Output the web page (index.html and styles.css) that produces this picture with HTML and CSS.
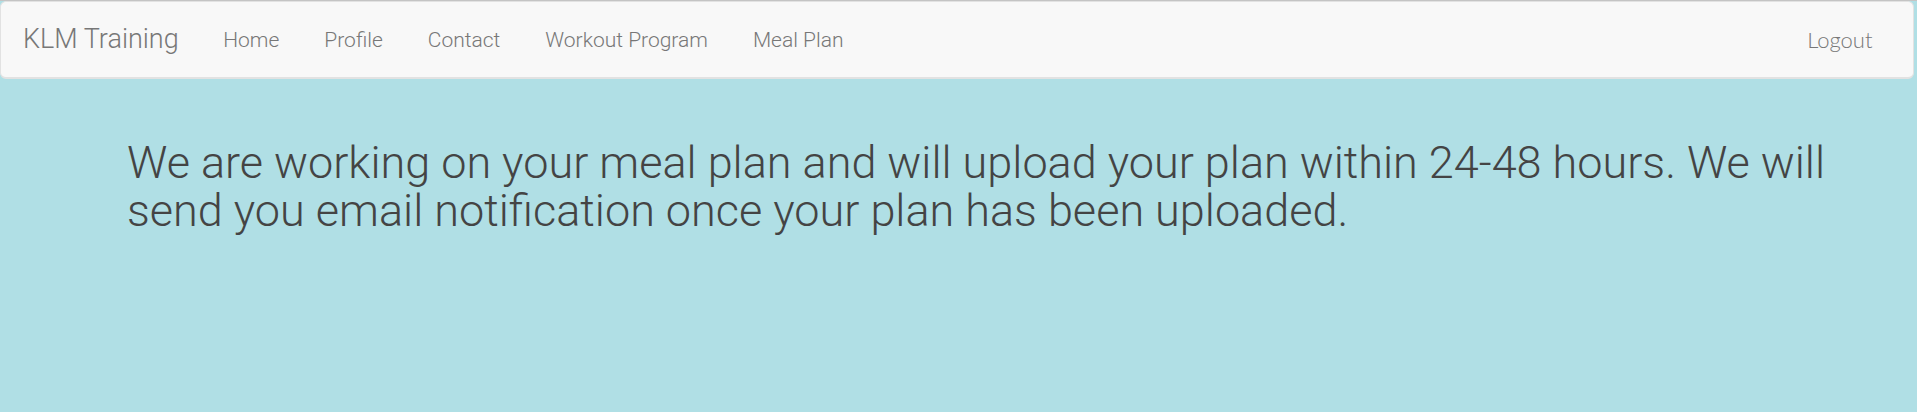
FILE: index.html
```html
<!DOCTYPE html>
<html>
<head>
<meta charset="utf-8">
<title>KLM Training</title>
<link rel="stylesheet" href="styles.css">
</head>
<body>
<header class="topbar">
  <nav class="navbar">
    <a class="brand" href="#">KLM Training</a>
    <ul class="nav">
      <li><a href="#">Home</a></li>
      <li><a href="#">Profile</a></li>
      <li><a href="#">Contact</a></li>
      <li><a href="#">Workout Program</a></li>
      <li><a href="#">Meal Plan</a></li>
    </ul>
    <ul class="nav nav-right">
      <li><a class="logout" href="#">Logout</a></li>
    </ul>
  </nav>
</header>
<main class="content">
  <h2 class="notice">We are working on your meal plan and will upload your plan within 24-48 hours. We will send you email notification once your plan has been uploaded.</h2>
</main>
</body>
</html>
```

FILE: styles.css
```css
html, body {
  margin: 0;
  padding: 0;
}
body {
  background: #b0dfe5;
  font-family: Roboto, "Liberation Sans", sans-serif;
  font-weight: 300;
  min-height: 412px;
}
.topbar {
  border-top: 1px solid #c4c4c4;
  padding-right: 3px;
}
.navbar {
  display: flex;
  align-items: flex-start;
  height: 75px;
  background: #f8f8f8;
  border: 1px solid #e2e2e2;
  border-bottom-width: 2px;
  border-radius: 6px;
  box-sizing: content-box;
}
.brand {
  font-size: 27px;
  line-height: 30px;
  padding: 22px 22px 23px 22px;
  color: #777;
  text-decoration: none;
}
.nav {
  display: flex;
  list-style: none;
  margin: 0;
  padding: 0;
}
.nav a {
  display: block;
  font-size: 21px;
  line-height: 30px;
  padding: 23px 22.5px 22px;
  color: #777;
  text-decoration: none;
}
.nav-right {
  margin-left: auto;
  padding-right: 18px;
}
.nav a.logout {
  font-family: Lato, "Liberation Sans", sans-serif;
  font-weight: 300;
  font-size: 22px;
}
.content {
  padding: 0 50px 0 127px;
}
.notice {
  margin: 60px 0 0;
  font-size: 45px;
  line-height: 48px;
  font-weight: 300;
  color: #444;
  max-width: 1740px;
}
```
